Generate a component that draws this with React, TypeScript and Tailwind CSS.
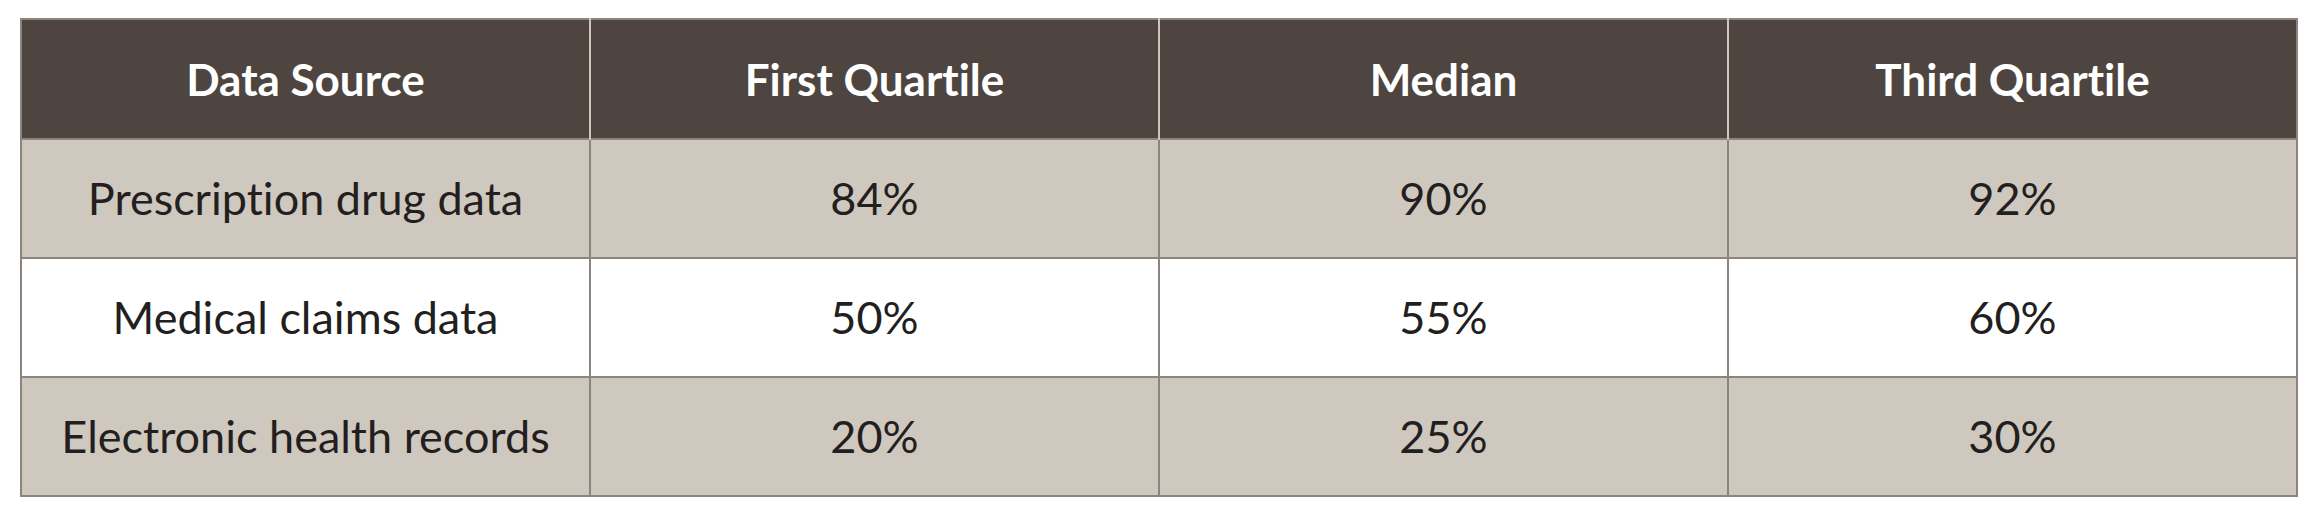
const rows = [
  { source: "Prescription drug data", q1: "84%", median: "90%", q3: "92%" },
  { source: "Medical claims data", q1: "50%", median: "55%", q3: "60%" },
  { source: "Electronic health records", q1: "20%", median: "25%", q3: "30%" },
];

const headers = ["Data Source", "First Quartile", "Median", "Third Quartile"];

export default function App() {
  return (
    <div className="w-[2318px] h-[512px] bg-white pl-[20px] pt-[18px] font-['Lato',sans-serif] [font-variant-ligatures:none]">
      <table className="w-[2278px] table-fixed border-collapse border-2 border-[#8c857f]">
        <thead>
          <tr className="h-[120px] bg-[#4e4540]">
            {headers.map((h, i) => (
              <th
                key={h}
                className={`text-center text-[44px] font-bold text-white ${
                  i > 0 ? "border-l-2 border-[#cdc6bf]" : ""
                }`}
              >
                {h}
              </th>
            ))}
          </tr>
        </thead>
        <tbody>
          {rows.map((r, i) => (
            <tr
              key={r.source}
              className={`h-[119px] border-t-2 border-[#8c857f] ${
                i % 2 === 0 ? "bg-[#cfc8bf]" : "bg-white"
              }`}
            >
              {[r.source, r.q1, r.median, r.q3].map((v, j) => (
                <td
                  key={j}
                  className={`text-center text-[45px] text-[#231f20] ${
                    j > 0 ? "border-l-2 border-[#8c857f]" : ""
                  }`}
                >
                  {v}
                </td>
              ))}
            </tr>
          ))}
        </tbody>
      </table>
    </div>
  );
}
